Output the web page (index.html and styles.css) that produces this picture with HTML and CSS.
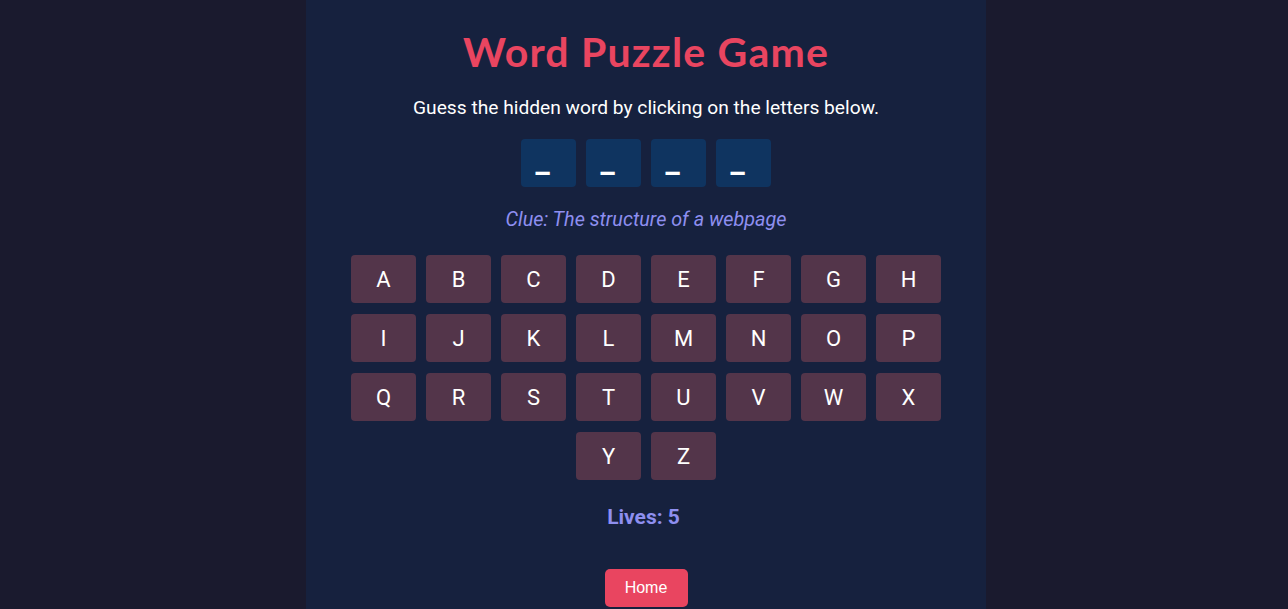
FILE: index.html
```html
<!DOCTYPE html>
<html lang="en">
<head>
<meta charset="utf-8">
<title>Word Puzzle Game</title>
<link rel="stylesheet" href="styles.css">
</head>
<body>
<main class="game">
  <h1 class="title">Word Puzzle Game</h1>
  <p class="intro">Guess the hidden word by clicking on the letters below.</p>
  <div class="word">
    <span class="tile">_</span>
    <span class="tile">_</span>
    <span class="tile">_</span>
    <span class="tile">_</span>
  </div>
  <p class="clue">Clue: The structure of a webpage</p>
  <div class="keys">
    <button class="key">A</button><button class="key">B</button><button class="key">C</button><button class="key">D</button><button class="key">E</button><button class="key">F</button><button class="key">G</button><button class="key">H</button>
    <button class="key">I</button><button class="key">J</button><button class="key">K</button><button class="key">L</button><button class="key">M</button><button class="key">N</button><button class="key">O</button><button class="key">P</button>
    <button class="key">Q</button><button class="key">R</button><button class="key">S</button><button class="key">T</button><button class="key">U</button><button class="key">V</button><button class="key">W</button><button class="key">X</button>
    <button class="key">Y</button><button class="key">Z</button>
  </div>
  <p class="lives">Lives: 5</p>
  <button class="home">Home</button>
</main>
</body>
</html>
```

FILE: styles.css
```css
html, body {
  margin: 0;
  height: 100%;
}
body {
  background: #1a1a2e;
  font-family: Roboto, "Liberation Sans", sans-serif;
  color: #ffffff;
  padding-left: 4px;
  overflow: hidden;
}
.game {
  width: 680px;
  margin: 0 auto;
  min-height: 100%;
  background: #16213e;
  display: flex;
  flex-direction: column;
  align-items: center;
  text-align: center;
}
.title {
  margin: 28px 0 0;
  font-family: Lato, Roboto, sans-serif;
  font-weight: 700;
  font-size: 41px;
  letter-spacing: 1.2px;
  line-height: 48px;
  color: #e94560;
}
.intro {
  margin: 21px 0 0;
  font-size: 19.2px;
  line-height: 22px;
}
.word {
  display: flex;
  gap: 10px;
  margin-top: 20px;
}
.tile {
  width: 55px;
  height: 48px;
  box-sizing: border-box;
  padding-right: 12px;
  background: #0f3460;
  border-radius: 4px;
  font-size: 32px;
  font-weight: 700;
  line-height: 44px;
  color: #ffffff;
}
.clue {
  margin: 22px 0 0;
  font-size: 19.8px;
  line-height: 22px;
  font-style: italic;
  color: #8e8ff0;
}
.keys {
  display: flex;
  flex-wrap: wrap;
  justify-content: center;
  gap: 11px 10px;
  width: 590px;
  margin-top: 24px;
}
.key {
  width: 65px;
  height: 48px;
  border: none;
  border-radius: 4px;
  background: #53354a;
  color: #ffffff;
  font-family: Roboto, sans-serif;
  font-size: 22px;
  padding: 0;
}
.lives {
  margin: 25px 0 0;
  padding-right: 5px;
  font-size: 21px;
  line-height: 24px;
  font-weight: 700;
  color: #8e8ff0;
}
.home {
  margin-top: 40px;
  width: 83px;
  height: 38px;
  border: none;
  border-radius: 5px;
  background: #e94560;
  color: #ffffff;
  font-family: "Liberation Sans", Arial, sans-serif;
  font-size: 16px;
  padding: 0;
}
```
